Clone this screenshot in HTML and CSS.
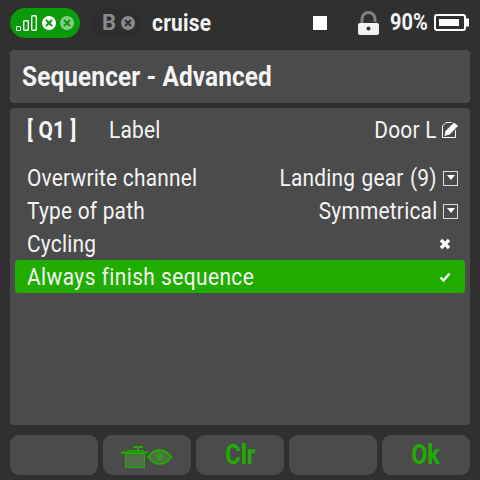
FILE: index.html
```html
<!DOCTYPE html>
<html lang="en">
<head>
    <meta charset="UTF-8">
    <title>Sequencer - Advanced</title>
    <link rel="stylesheet" href="styles.css">
</head>
<body>
    <div class="screen">
        <div class="status-bar">
            <div class="link-pill">
                <svg class="signal" width="24" height="20" viewBox="0 0 24 20">
                    <rect x="1.500" y="13.500" width="4" height="4" rx="0.500" fill="none" stroke="#fff"/>
                    <rect x="8.700" y="7.700" width="4.600" height="9.600" rx="1" fill="none" stroke="#fff" stroke-width="1.400"/>
                    <rect x="16.700" y="2.700" width="4.600" height="14.600" rx="1" fill="none" stroke="#fff" stroke-width="1.400"/>
                </svg>
                <svg class="x-dot" width="14" height="14" viewBox="0 0 14 14">
                    <circle cx="7" cy="7" r="7" fill="#fff"/>
                    <path d="M4 4l6 6M10 4l-6 6" stroke="#0a9a0a" stroke-width="2"/>
                </svg>
                <svg class="x-dot" width="14" height="14" viewBox="0 0 14 14">
                    <circle cx="7" cy="7" r="7" fill="#84ce84"/>
                    <path d="M4 4l6 6M10 4l-6 6" stroke="#0a9a0a" stroke-width="2"/>
                </svg>
            </div>
            <div class="rx-pill">
                <span class="rx-letter">B</span>
                <svg width="14" height="14" viewBox="0 0 14 14">
                    <circle cx="7" cy="7" r="7" fill="#8a8a8a"/>
                    <path d="M4 4l6 6M10 4l-6 6" stroke="#303030" stroke-width="2"/>
                </svg>
            </div>
            <span class="mode-name">cruise</span>
            <span class="stop-mark"></span>
            <svg class="lock" width="22" height="26" viewBox="0 0 22 26">
                <path d="M5 13V9a6.500 6.500 0 0 1 13 0v3" fill="none" stroke="#808080" stroke-width="3"/>
                <rect x="1" y="13" width="21" height="12" rx="2" fill="#f2f2f2"/>
                <circle cx="11.500" cy="18.500" r="2" fill="#303030"/>
            </svg>
            <span class="batt-text">90%</span>
            <svg class="batt" width="36" height="19" viewBox="0 0 36 19">
                <rect x="1" y="2" width="30" height="15" rx="2" fill="none" stroke="#fff" stroke-width="2"/>
                <rect x="5" y="6" width="20" height="7" fill="#fff"/>
                <rect x="32" y="5.500" width="3" height="8" fill="#fff"/>
            </svg>
        </div>

        <div class="title-panel"><span class="narrow">Sequencer - Advanced</span></div>

        <div class="main-panel">
            <div class="row label-row">
                <span class="seq-id narrow">[ Q1 ]</span>
                <span class="narrow">Label</span>
                <span class="row-value">
                    <span class="narrow">Door L</span>
                    <svg class="edit-icon" width="16" height="16" viewBox="0 0 16 16">
                        <path d="M9.500 0.500H4L0.500 4V15.500H13.500V8" fill="none" stroke="#fff"/>
                        <path d="M2.500 14l1-5L12 0.500 16 4 7.500 12.500z" fill="#fff"/>
                    </svg>
                </span>
            </div>
            <div class="rows">
                <div class="row">
                    <span class="narrow">Overwrite channel</span>
                    <span class="row-value">
                        <span class="narrow wide-words">Landing gear (9)</span>
                        <span class="drop-box"></span>
                    </span>
                </div>
                <div class="row">
                    <span class="narrow">Type of path</span>
                    <span class="row-value">
                        <span class="narrow">Symmetrical</span>
                        <span class="drop-box"></span>
                    </span>
                </div>
                <div class="row">
                    <span class="narrow">Cycling</span>
                    <svg class="flag" width="12" height="12" viewBox="0 0 12 12">
                        <path d="M2 2l8 8M10 2l-8 8" stroke="#fff" stroke-width="3.200"/>
                    </svg>
                </div>
                <div class="row row-active">
                    <span class="narrow">Always finish sequence</span>
                    <svg class="flag" width="12" height="12" viewBox="0 0 12 12">
                        <path d="M1.500 6.500l3 3 6-7" fill="none" stroke="#fff" stroke-width="2.400"/>
                    </svg>
                </div>
            </div>
        </div>

        <div class="softkeys">
            <div class="softkey"></div>
            <div class="softkey">
                <svg width="54" height="28" viewBox="0 0 54 28">
                    <path d="M13 6h10M18 6v3" stroke="#1fae00" stroke-width="2" fill="none"/>
                    <path d="M5.500 12.500h19V26.500h-19z" fill="#4f6f45" stroke="#1fae00"/>
                    <path d="M7.500 11V9.500h16V11" fill="none" stroke="#1fae00"/>
                    <path d="M1 11.500H28" stroke="#1fae00" stroke-width="2"/>
                    <path d="M28 16c4-5 8-7 11.500-7s8 2 12 7c-4 5-8.500 7-12 7s-7.500-2-11.500-7z" fill="#4f6f45" stroke="#1fae00" stroke-width="2"/>
                    <circle cx="39.500" cy="16" r="4" fill="#3f8a2c"/>
                    <circle cx="39.500" cy="16" r="1.500" fill="#1fae00"/>
                </svg>
            </div>
            <div class="softkey"><span class="narrow">Clr</span></div>
            <div class="softkey"></div>
            <div class="softkey"><span class="narrow">Ok</span></div>
        </div>
    </div>
</body>
</html>
```

FILE: styles.css
```css
* {
    margin: 0;
    padding: 0;
    box-sizing: border-box;
}

body {
    width: 480px;
    height: 480px;
    overflow: hidden;
    background: #303030;
    font-family: Roboto, "Liberation Sans", sans-serif;
    color: #f4f4f4;
}

.screen {
    display: flex;
    flex-direction: column;
    height: 480px;
    padding: 0 10px 5px;
}

/* squeezes the wide Roboto down to the radio's condensed look */
.narrow {
    display: inline-block;
    transform: scaleX(0.87);
    transform-origin: left center;
}

.wide-words {
    word-spacing: 1px;
}

.status-bar {
    display: flex;
    align-items: center;
    height: 50px;
    margin: 0 -10px;
    padding: 5px 0 10px 10px;
    flex: none;
}

.link-pill {
    display: flex;
    align-items: center;
    flex: none;
    width: 70px;
    height: 30px;
    padding-left: 5px;
    border-radius: 15px;
    background: #0a9a0a;
}

.signal {
    margin-right: 3px;
}

.x-dot {
    margin-right: 4px;
}

.rx-pill {
    display: flex;
    align-items: center;
    flex: none;
    gap: 7px;
    width: 50px;
    height: 30px;
    margin-left: 12px;
    padding-left: 10px;
    border-radius: 15px;
    background: #2d2d2d;
}

.rx-letter {
    font-size: 22px;
    font-weight: 700;
    color: #8a8a8a;
    width: 12px;
}

.mode-name {
    flex: none;
    width: 158px;
    margin-left: 10px;
    font-size: 24px;
    font-weight: 700;
    letter-spacing: 0.3px;
    transform: scaleX(0.87);
    transform-origin: left center;
}

.stop-mark {
    flex: none;
    width: 14px;
    height: 14px;
    margin-left: 3px;
    background: #fff;
}

.lock {
    flex: none;
    margin-left: 30px;
}

.batt-text {
    flex: none;
    margin-left: 11px;
    width: 44px;
    font-size: 23px;
    font-weight: 700;
    transform: scaleX(0.87);
    transform-origin: left center;
}

.batt {
    flex: none;
}

.title-panel {
    display: flex;
    align-items: center;
    flex: none;
    height: 53px;
    padding-left: 12px;
    border-radius: 4px;
    background: #4b4b4b;
    font-size: 28px;
    font-weight: 700;
    letter-spacing: 0.15px;
    white-space: nowrap;
}

.main-panel {
    flex: none;
    height: 317px;
    margin-top: 5px;
    padding: 5px;
    border-radius: 4px;
    background: #4b4b4b;
}

.rows {
    margin-top: 15px;
}

.row {
    display: flex;
    align-items: center;
    justify-content: space-between;
    height: 33px;
    padding: 1px 7px 0 12px;
    border-radius: 4px;
    font-size: 24px;
    letter-spacing: 0.25px;
    white-space: nowrap;
}

.label-row {
    justify-content: flex-start;
}

.seq-id {
    width: 82px;
    font-weight: 700;
}

.row-value {
    display: flex;
    align-items: center;
    justify-content: flex-end;
    margin-left: auto;
}

.row-value .narrow {
    transform-origin: right center;
}

.edit-icon {
    margin-left: 5px;
}

.drop-box {
    position: relative;
    width: 15px;
    height: 15px;
    margin-left: 6px;
    border: 1px solid #dcdcdc;
}

.drop-box::after {
    content: "";
    position: absolute;
    left: 3px;
    top: 3px;
    border-left: 4px solid transparent;
    border-right: 4px solid transparent;
    border-top: 5px solid #fff;
}

.flag {
    margin-right: 7px;
}

.row-active {
    background: #21ad00;
    letter-spacing: 0.5px;
}

.softkeys {
    display: grid;
    grid-template-columns: repeat(5, 88px);
    gap: 5px;
    margin-top: 10px;
    height: 40px;
}

.softkey {
    display: flex;
    align-items: center;
    justify-content: center;
    border-radius: 9px;
    background: #4b4b4b;
    color: #21ad00;
    font-size: 27px;
    font-weight: 700;
}

.softkey .narrow {
    transform-origin: center;
}
```
